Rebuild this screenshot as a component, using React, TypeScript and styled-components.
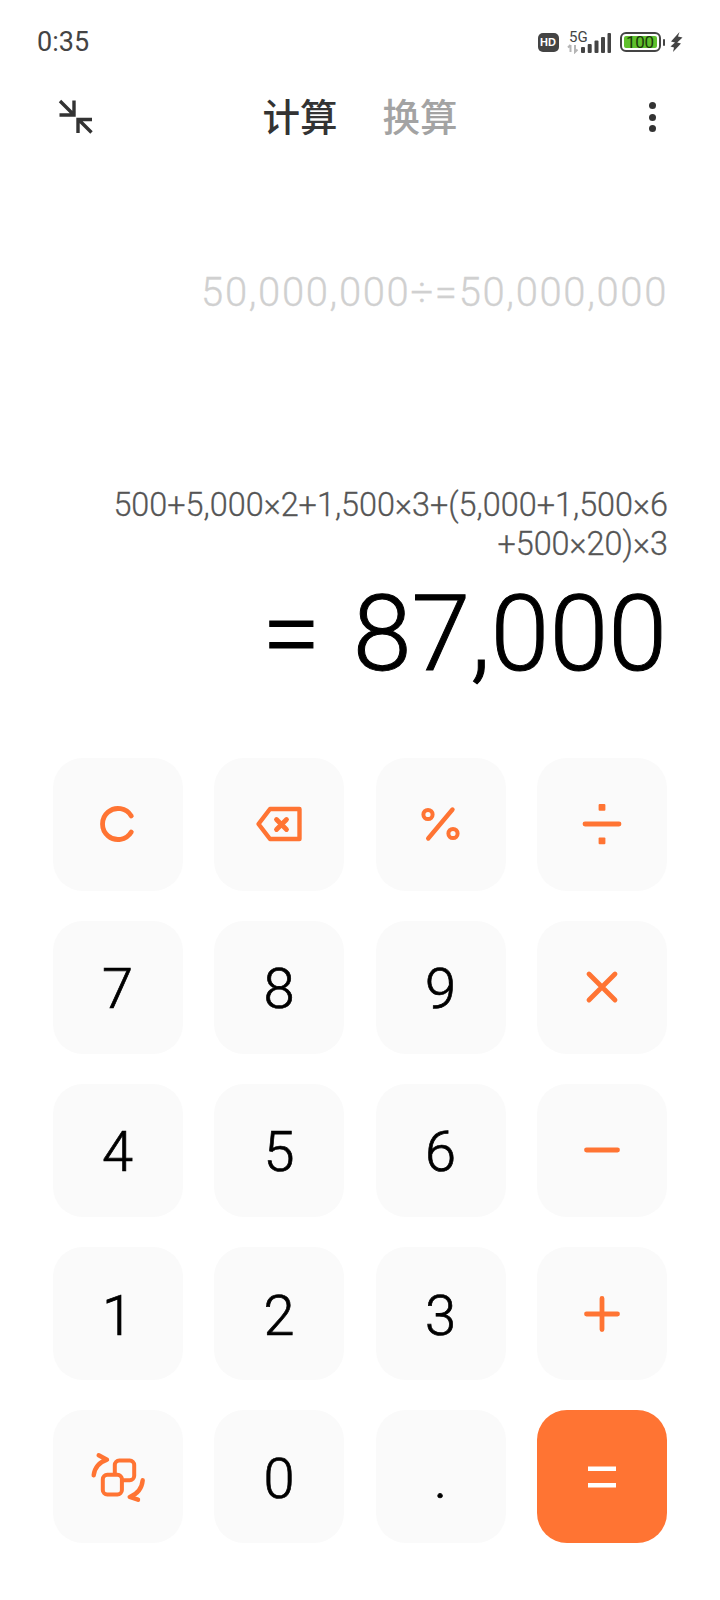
import React from 'react';
import styled, { createGlobalStyle } from 'styled-components';

const ORANGE = '#ff7433';
const KEY_BG = '#fafafa';

const GlobalStyle = createGlobalStyle`
  html, body {
    margin: 0;
    padding: 0;
    background: #ffffff;
  }
  body {
    font-family: Roboto, "Noto Sans CJK SC", sans-serif;
  }
`;

type GlyphProps = { children: React.ReactNode; color?: string };

function Glyph({ children, color = ORANGE }: GlyphProps) {
  return (
    <KeyIcon viewBox="-30 -30 60 60" fill="none" stroke={color} strokeWidth="4.8" strokeLinecap="round" strokeLinejoin="round">
      {children}
    </KeyIcon>
  );
}

const icons: Record<string, React.ReactNode> = {
  clear: <path d="M13.3 -8A15.5 15.5 0 1 0 13.3 8" />,
  back: (
    <>
      <path d="M-20.5 0L-9 -15H20.5V15H-9Z" strokeWidth="4.4" />
      <path d="M-2.5 -4.5L7.5 5.5M7.5 -4.5L-2.5 5.5" />
    </>
  ),
  percent: (
    <>
      <circle cx="-13" cy="-9.5" r="4.6" strokeWidth="4" />
      <circle cx="12" cy="9.5" r="4.6" strokeWidth="4" />
      <path d="M11.5 -14.5L-12.8 14.5" strokeWidth="4.4" />
    </>
  ),
  divide: (
    <>
      <path d="M-17 0H17" />
      <rect x="-3.4" y="-20" width="6.8" height="6.8" rx="1" fill={ORANGE} stroke="none" />
      <rect x="-3.4" y="13.4" width="6.8" height="6.8" rx="1" fill={ORANGE} stroke="none" />
    </>
  ),
  times: <path d="M-13 -13L13 13M13 -13L-13 13" />,
  minus: <path d="M-15.5 0H15.5" />,
  plus: <path d="M-15.5 0H15.5M0 -15.5V15.5" />,
  swap: (
    <>
      <rect x="-3.2" y="-16.5" width="19.4" height="19.7" rx="4.5" strokeWidth="4" />
      <rect x="-15.2" y="-2.2" width="19.1" height="19.7" rx="4.5" strokeWidth="4" fill={KEY_BG} />
      <path d="M-24.3 -1.7C-23.5 -8.5 -19 -14.5 -11 -17.3L-19.3 -21.7" strokeWidth="4.4" />
      <path d="M24.7 3.3C24 10.5 19.5 17 11.7 20L20 22.7" strokeWidth="4.4" />
    </>
  ),
};

type KeyDef = { label?: string; icon?: string };

const keys: KeyDef[] = [
  { icon: 'clear' },
  { icon: 'back' },
  { icon: 'percent' },
  { icon: 'divide' },
  { label: '7' },
  { label: '8' },
  { label: '9' },
  { icon: 'times' },
  { label: '4' },
  { label: '5' },
  { label: '6' },
  { icon: 'minus' },
  { label: '1' },
  { label: '2' },
  { label: '3' },
  { icon: 'plus' },
  { icon: 'swap' },
  { label: '0' },
  { label: '.' },
];

export default function App() {
  return (
    <Screen>
      <GlobalStyle />
      <StatusBar>
        <Clock>0:35</Clock>
        <StatusIcons>
          <HdBadge>HD</HdBadge>
          <NetworkIcon width="44" height="28" viewBox="0 -4 44 28">
            <text x="2" y="12" fontFamily="Roboto, sans-serif" fontSize="15" fill="#444">5G</text>
            <path d="M3.5 15V22M1 17.5L3.5 15M8 15V22L10.5 19.5" stroke="#b5b5b5" strokeWidth="2" fill="none" />
            <rect x="14" y="17" width="4" height="6" rx="1" fill="#444" />
            <rect x="20.7" y="14" width="4" height="9" rx="1" fill="#444" />
            <rect x="27.5" y="10.5" width="4" height="12.5" rx="1" fill="#444" />
            <rect x="34" y="7" width="4" height="16" rx="1" fill="#444" />
            <rect x="40.5" y="3" width="3.5" height="20" rx="1" fill="#444" />
          </NetworkIcon>
          <Battery>
            <BatteryFill>100</BatteryFill>
          </Battery>
          <BatteryNub />
          <BoltIcon width="13" height="20" viewBox="0 0 13 20">
            <path d="M9.5 0L1 9.5L5 10.5L0.5 14.5L4 15.5L3 20L11 11.5L7.2 10.5L12.5 5.5L8 4.5L9.5 0Z" fill="#444" />
          </BoltIcon>
        </StatusIcons>
      </StatusBar>

      <TopBar>
        <CollapseIcon width="36" height="36" viewBox="0 0 36 36" fill="none" stroke="#333" strokeWidth="3.4">
          <path d="M2.5 17H17V2.5M3 3L16.5 16.5" />
          <path d="M21 35V21.5H35M21.5 21.5L34.5 34.5" />
        </CollapseIcon>
        <Tabs>
          <Tab $active>计算</Tab>
          <Tab>换算</Tab>
        </Tabs>
        <MenuDots>
          <Dot />
          <Dot />
          <Dot />
        </MenuDots>
      </TopBar>

      <History>50,000,000÷=50,000,000</History>

      <Expression>
        500+5,000×2+1,500×3+(5,000+1,500×6
        <br />
        +500×20)×3
      </Expression>

      <Result>
        <ResultSign>=</ResultSign>
        87,000
      </Result>

      <Keypad>
        {keys.map((key, i) => (
          <Key key={i}>{key.icon ? <Glyph>{icons[key.icon]}</Glyph> : <KeyLabel>{key.label}</KeyLabel>}</Key>
        ))}
        <EqualsKey>
          <Glyph color="#ffffff">
            <path d="M-14 -8.3H14M-14 8.3H14" strokeWidth="4.6" strokeLinecap="butt" />
          </Glyph>
        </EqualsKey>
      </Keypad>
    </Screen>
  );
}

const Screen = styled.div`
  width: 720px;
  height: 1600px;
  background: #ffffff;
  overflow: hidden;
`;

const StatusBar = styled.div`
  height: 84px;
  padding: 0 37px;
  box-sizing: border-box;
  display: flex;
  align-items: center;
  justify-content: space-between;
`;

const Clock = styled.span`
  font-size: 27px;
  color: #444444;
`;

const StatusIcons = styled.div`
  display: flex;
  align-items: center;
`;

const NetworkIcon = styled.svg`
  margin: -4px 9px 0 8px;
`;

const BoltIcon = styled.svg`
  margin-left: 5px;
`;

const HdBadge = styled.div`
  width: 21px;
  height: 19px;
  border-radius: 5px;
  background: #444444;
  color: #ffffff;
  font-family: "Liberation Sans", sans-serif;
  font-size: 11px;
  font-weight: 700;
  display: flex;
  align-items: center;
  justify-content: center;
`;

const Battery = styled.div`
  width: 41px;
  height: 20px;
  box-sizing: border-box;
  border: 2px solid #444444;
  border-radius: 6px;
  padding: 2px;
  display: flex;
`;

const BatteryFill = styled.div`
  flex: 1;
  background: #5fc02c;
  border-radius: 2px;
  color: #1c3a0c;
  font-size: 17px;
  line-height: 12px;
  letter-spacing: -0.3px;
  text-align: center;
`;

const BatteryNub = styled.div`
  width: 2.5px;
  height: 7px;
  margin-left: 2px;
  border-radius: 1px;
  background: #444444;
`;

const TopBar = styled.div`
  height: 66px;
  padding: 0 64px 0 57px;
  box-sizing: border-box;
  display: grid;
  grid-template-columns: 1fr auto 1fr;
  align-items: center;
`;

const CollapseIcon = styled.svg`
  margin-top: -2px;
`;

const Tabs = styled.div`
  display: flex;
  gap: 45px;
  margin: -4px 0 0 7px;
`;

const Tab = styled.span<{ $active?: boolean }>`
  font-family: "Noto Sans CJK SC", sans-serif;
  font-size: 37.5px;
  font-weight: 500;
  line-height: 44px;
  color: ${(p) => (p.$active ? '#333333' : '#a3a3a3')};
`;

const MenuDots = styled.div`
  justify-self: end;
  display: flex;
  flex-direction: column;
  gap: 4.5px;
`;

const Dot = styled.span`
  width: 7px;
  height: 7px;
  border-radius: 50%;
  background: #333333;
`;

const History = styled.div`
  margin-top: 118px;
  padding-right: 52px;
  text-align: right;
  font-size: 40px;
  line-height: 50px;
  font-weight: 300;
  letter-spacing: 1.65px;
  -webkit-text-stroke: 0.3px #d0d0d0;
  color: #d0d0d0;
`;

const Expression = styled.div`
  margin-top: 168px;
  padding-right: 52px;
  text-align: right;
  font-size: 32.4px;
  line-height: 39px;
  font-weight: 300;
  -webkit-text-stroke: 0.3px #555555;
  color: #555555;
`;

const Result = styled.div`
  margin-top: 10px;
  padding-right: 53px;
  display: flex;
  justify-content: flex-end;
  align-items: center;
  font-size: 106px;
  line-height: 120px;
  font-weight: 300;
  -webkit-text-stroke: 1px #000000;
  color: #000000;
`;

const ResultSign = styled.span`
  margin-right: 32px;
`;

const Keypad = styled.div`
  margin-top: 64px;
  padding-left: 52.5px;
  display: grid;
  grid-template-columns: repeat(4, 130px);
  grid-auto-rows: 132.5px;
  column-gap: 31.5px;
  row-gap: 30.6px;
`;

const Key = styled.div`
  border-radius: 30px;
  background: ${KEY_BG};
  display: flex;
  align-items: center;
  justify-content: center;
  font-size: 56px;
  font-weight: 300;
  -webkit-text-stroke: 0.7px #000000;
  color: #000000;
`;

const KeyLabel = styled.span`
  padding-top: 4px;
`;

const EqualsKey = styled(Key)`
  background: ${ORANGE};
`;

const KeyIcon = styled.svg`
  width: 60px;
  height: 60px;
`;
